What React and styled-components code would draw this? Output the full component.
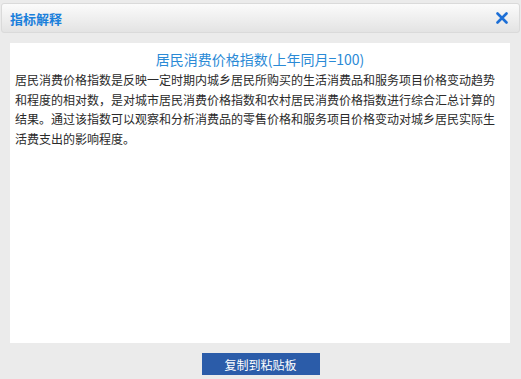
import React from "react";
import styled, { createGlobalStyle } from "styled-components";

const Global = createGlobalStyle`
  html, body {
    margin: 0;
    padding: 0;
    background: #ebebeb;
  }
  body {
    font-family: "Noto Sans CJK SC", "Noto Sans", sans-serif;
  }
`;

const Dialog = styled.div`
  width: 521px;
  height: 379px;
  box-sizing: border-box;
  background: #ebebeb;
  display: flex;
  flex-direction: column;
  padding-top: 3px;
`;

const Header = styled.div`
  height: 30px;
  margin: 0 1px 0 1px;
  box-sizing: border-box;
  border: 1px solid #dadada;
  border-radius: 3px;
  background: linear-gradient(#fbfbfb, #e3e3e3);
  display: flex;
  align-items: center;
  justify-content: space-between;
  padding: 0 11px 0 8px;
`;

const Title = styled.span`
  font-size: 13px;
  font-weight: bold;
  color: #1a7fdb;
`;

const Close = styled.button`
  border: 0;
  background: none;
  padding: 0;
  width: 12px;
  height: 12px;
  cursor: pointer;
  display: flex;
`;

const Panel = styled.div`
  margin: 10px 11px 0 10px;
  height: 300px;
  background: #fff;
  padding: 5px 5px 0 5px;
  box-sizing: border-box;
`;

const Heading = styled.h2`
  margin: 0;
  text-align: center;
  font-size: 14px;
  font-weight: normal;
  line-height: 22px;
  color: #2a8ad6;
`;

const Body = styled.p`
  margin: 0;
  font-size: 12px;
  line-height: 19.5px;
  color: #2a2a2a;
`;

const Footer = styled.div`
  display: flex;
  justify-content: center;
  padding-top: 10px;
`;

const CopyButton = styled.button`
  width: 118px;
  height: 22px;
  border: 0;
  background: #2b5ca9;
  color: #fff;
  font-family: inherit;
  font-size: 12px;
  padding: 0;
  cursor: pointer;
`;

export default function App() {
  return (
    <Dialog>
      <Global />
      <Header>
        <Title>指标解释</Title>
        <Close>
          <svg width="12" height="12" viewBox="0 0 12 12">
            <path d="M1.5 1.5 L10.5 10.5 M10.5 1.5 L1.5 10.5" stroke="#1d6fd6" strokeWidth="2.6" strokeLinecap="round" />
          </svg>
        </Close>
      </Header>
      <Panel>
        <Heading>居民消费价格指数(上年同月=100)</Heading>
        <Body>
          居民消费价格指数是反映一定时期内城乡居民所购买的生活消费品和服务项目价格变动趋势和程度的相对数，是对城市居民消费价格指数和农村居民消费价格指数进行综合汇总计算的结果。通过该指数可以观察和分析消费品的零售价格和服务项目价格变动对城乡居民实际生活费支出的影响程度。
        </Body>
      </Panel>
      <Footer>
        <CopyButton>复制到粘贴板</CopyButton>
      </Footer>
    </Dialog>
  );
}
